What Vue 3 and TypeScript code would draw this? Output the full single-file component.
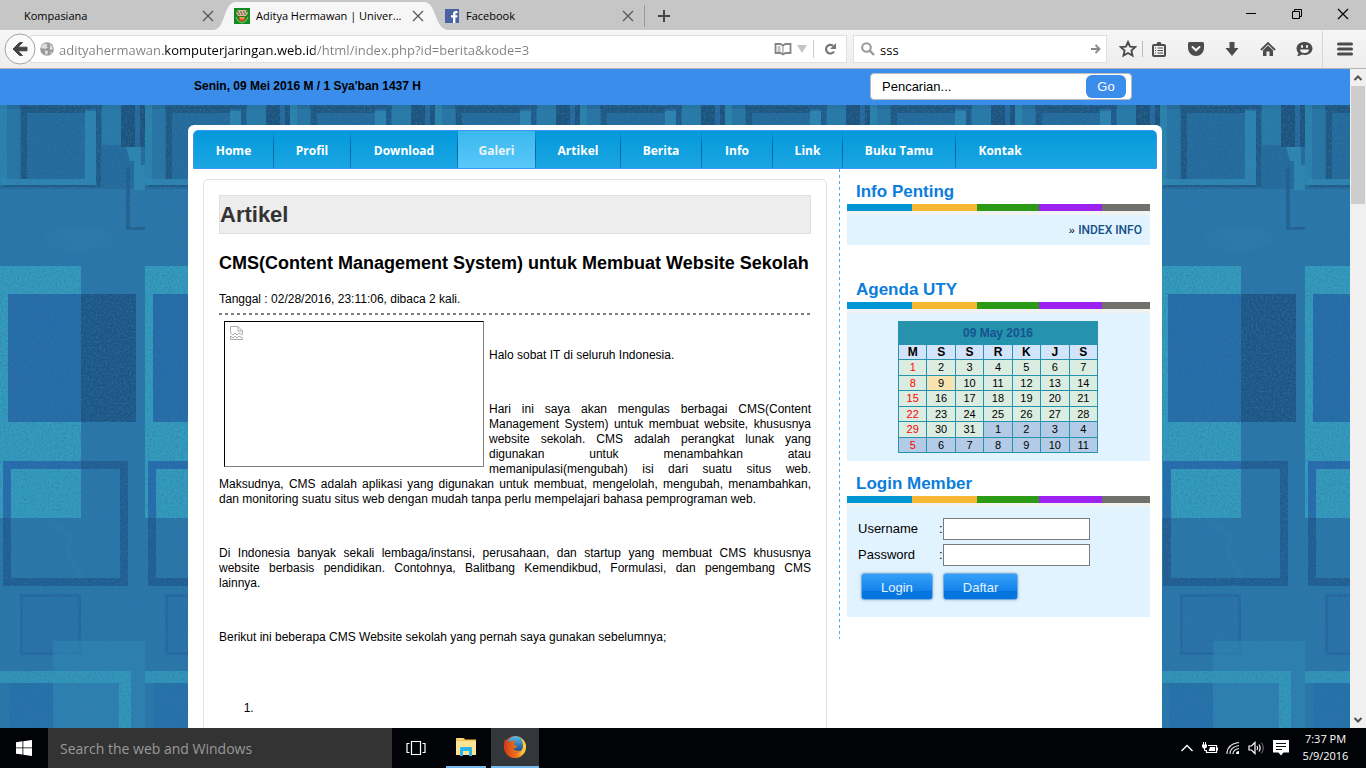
<script setup lang="ts">
import { ref } from 'vue'

interface Day {
  n: number
  other?: boolean
  today?: boolean
}

const menu: string[] = ['Home', 'Profil', 'Download', 'Galeri', 'Artikel', 'Berita', 'Info', 'Link', 'Buku Tamu', 'Kontak']
const activeMenu = ref('Galeri')

const weekdays: string[] = ['M', 'S', 'S', 'R', 'K', 'J', 'S']
const weeks: Day[][] = Array.from({ length: 6 }, (_, w) =>
  Array.from({ length: 7 }, (_, d) => {
    const n = w * 7 + d + 1
    return n > 31 ? { n: n - 31, other: true } : { n, today: n === 9 }
  }),
)

const url = ref('adityahermawan.komputerjaringan.web.id/html/index.php?id=berita&kode=3')
const webSearch = ref('sss')
const siteSearch = ref('Pencarian...')
const taskSearch = ref('')
const username = ref('')
const password = ref('')
</script>

<template>
  <div class="desktop">
    <header class="tabs">
      <div class="tab first">
        <button class="tab-label" type="button">Kompasiana</button>
        <button class="close" type="button" aria-label="Close tab">
          <svg width="12" height="12" viewBox="0 0 12 12"><path d="M1 1L11 11M11 1L1 11" stroke="#555" stroke-width="1.2" fill="none" /></svg>
        </button>
      </div>
      <div class="tab active">
        <svg class="tab-shape" width="236" height="28" viewBox="0 0 236 28"><path d="M0 28C13 28 10 0 23 0H211C224 0 221 28 236 28Z" fill="#f6f6f6" /></svg>
        <svg class="favicon" width="16" height="16" viewBox="0 0 16 16">
          <rect width="16" height="16" fill="#118a22" />
          <path d="M2 5L4 2H12L14 5L12 8H4Z" fill="#e9b0a2" />
          <path d="M3 4H13M4 6H12" stroke="#247b2b" stroke-width="1" stroke-dasharray="2 1" />
          <path d="M5 8L8 10L11 8V12L8 14L5 12Z" fill="#e5482b" />
          <path d="M2 9L4 13L8 15L12 13L14 9" stroke="#75d468" fill="none" />
          <path d="M6 10H10" stroke="#ffe36b" />
        </svg>
        <button class="tab-label" type="button">Aditya Hermawan | Univer...</button>
        <button class="close" type="button" aria-label="Close tab">
          <svg width="12" height="12" viewBox="0 0 12 12"><path d="M1 1L11 11M11 1L1 11" stroke="#555" stroke-width="1.2" fill="none" /></svg>
        </button>
      </div>
      <div class="tab last">
        <svg class="favicon" width="14" height="14" viewBox="0 0 14 14">
          <rect width="14" height="14" fill="#4862a3" />
          <path d="M8 14V8.500H6V6.300H8V4.800C8 3 9 2 10.800 2H12.500V4.200H11.300C10.700 4.200 10.400 4.500 10.400 5.100V6.300H12.500L12.200 8.500H10.400V14Z" fill="#fff" />
        </svg>
        <button class="tab-label" type="button">Facebook</button>
        <button class="close" type="button" aria-label="Close tab">
          <svg width="12" height="12" viewBox="0 0 12 12"><path d="M1 1L11 11M11 1L1 11" stroke="#555" stroke-width="1.2" fill="none" /></svg>
        </button>
      </div>
      <button class="new-tab" type="button" aria-label="New tab">
        <svg width="12" height="12" viewBox="0 0 12 12"><path d="M6 0V12M0 6H12" stroke="#444" stroke-width="2" /></svg>
      </button>
      <div class="win-controls">
        <button type="button" aria-label="Minimize"><svg width="12" height="12" viewBox="0 0 12 12"><path d="M1 5.500H11" stroke="#000" /></svg></button>
        <button type="button" aria-label="Restore"><svg width="12" height="12" viewBox="0 0 12 12"><path d="M1.500 3.500H8.500V10.500H1.500ZM3.500 3.500V1.500H10.500V8.500H8.500" stroke="#000" fill="none" /></svg></button>
        <button type="button" aria-label="Close"><svg width="12" height="12" viewBox="0 0 12 12"><path d="M1 1L11 11M11 1L1 11" stroke="#000" stroke-width="1.200" /></svg></button>
      </div>
    </header>

    <div class="toolbar">
      <button class="back" type="button" aria-label="Back">
        <svg width="32" height="32" viewBox="0 0 32 32">
          <circle cx="16" cy="16" r="15" fill="#fafafa" stroke="#a3a3a3" />
          <path d="M9 16L15.500 9.500H18.500L14 14.200H23V17.800H14L18.500 22.500H15.500Z" fill="#444" stroke="#444" />
        </svg>
      </button>
      <div class="urlbar">
        <svg width="14" height="14" viewBox="0 0 14 14">
          <circle cx="7" cy="7" r="6.800" fill="#999" />
          <path d="M2 3L5 1.500L7.500 2L6.500 4L8 5L5.500 7L3.500 6.500L1 6ZM9 1.500L12 4L13 7L10.500 8L9.500 6L10.500 4ZM5 8.500L8 9L7.500 12L6 13L5 11ZM10 10L12 9.500L11 12Z" fill="#dedede" />
        </svg>
        <input v-model="url" class="url" type="text" aria-label="Address" />
        <button type="button" aria-label="Reader view">
          <svg width="18" height="14" viewBox="0 0 18 14">
            <path d="M1.500 2H6.500L9 3.500L11.500 2H16.500V11H11.500L9 12.500L6.500 11H1.500Z" fill="none" stroke="#858585" stroke-width="1.800" />
            <path d="M9 3V12.500M3.500 5H6.500M3.500 7H6.500M3.500 9H6.500" stroke="#858585" />
          </svg>
        </button>
        <svg class="caret" width="10" height="8" viewBox="0 0 10 8"><path d="M0 0H10L5 8Z" fill="#c4c4c4" /></svg>
        <button class="reload" type="button" aria-label="Reload">
          <svg width="12" height="12" viewBox="0 0 12 12">
            <path d="M9 2.800A4.300 4.300 0 1 0 10 8.500" fill="none" stroke="#777" stroke-width="2.200" />
            <path d="M12 0V6H6Z" fill="#777" />
          </svg>
        </button>
      </div>
      <div class="searchbar">
        <svg width="14" height="14" viewBox="0 0 14 14"><circle cx="5.500" cy="5.500" r="4.300" fill="none" stroke="#999" stroke-width="2" /><path d="M8.500 8.500L13 13" stroke="#999" stroke-width="2.400" /></svg>
        <input v-model="webSearch" type="text" aria-label="Web search" />
        <button type="button" aria-label="Search">
          <svg width="10" height="10" viewBox="0 0 10 10"><path d="M0 5H8M4.500 1L8.500 5L4.500 9" stroke="#888" stroke-width="1.800" fill="none" /></svg>
        </button>
      </div>
      <button class="tool star" type="button" aria-label="Bookmark">
        <svg width="18" height="18" viewBox="0 0 18 18"><path d="M9 2L11.100 6.600L16.200 7.100L12.400 10.500L13.500 15.600L9 13L4.500 15.600L5.600 10.500L1.800 7.100L6.900 6.600Z" fill="none" stroke="#4c4c4c" stroke-width="1.900" /></svg>
      </button>
      <button class="tool list" type="button" aria-label="Bookmarks list">
        <svg width="16" height="16" viewBox="0 0 16 16"><rect x="2" y="4" width="12" height="11" rx="1" fill="none" stroke="#4c4c4c" stroke-width="2" /><path d="M5 4L6.500 1H9.500L11 4Z" fill="#4c4c4c" /><path d="M4 7H5M6.500 7H12M4 9.500H5M6.500 9.500H12M4 12H5M6.500 12H12" stroke="#4c4c4c" stroke-width="1.200" /></svg>
      </button>
      <button class="tool" type="button" aria-label="Pocket">
        <svg width="16" height="16" viewBox="0 0 16 16"><path d="M1.500 1H14.500Q16 1 16 2.500V7A8 8 0 0 1 0 7V2.500Q0 1 1.500 1Z" fill="#4c4c4c" /><path d="M4.500 6L8 9.300L11.500 6" fill="none" stroke="#f4f4f4" stroke-width="2" stroke-linecap="round" /></svg>
      </button>
      <button class="tool" type="button" aria-label="Downloads">
        <svg width="16" height="16" viewBox="0 0 16 16"><path d="M5.500 1H10.500V7H14.500L8 15L1.500 7H5.500Z" fill="#4c4c4c" /></svg>
      </button>
      <button class="tool" type="button" aria-label="Home page">
        <svg width="16" height="16" viewBox="0 0 16 16"><path d="M1 9L8 2L15 9" fill="none" stroke="#4c4c4c" stroke-width="1.800" /><path d="M3 9.300L8 4.500L13 9.300V15H9.500V10.500H6.500V15H3Z" fill="#4c4c4c" /></svg>
      </button>
      <button class="tool" type="button" aria-label="Hello chat">
        <svg width="17" height="16" viewBox="0 0 17 16"><path d="M8.500 1C13 1 16.500 3.700 16.500 7.500S13 14 8.500 14Q7 14 6 13.600Q4 15.300 1 15Q2.600 13.600 2.400 12Q.5 10.200 .5 7.500C.5 3.700 4 1 8.500 1Z" fill="#4c4c4c" /><path d="M4 8.500H13Q12.500 12 8.500 12T4 8.500Z" fill="#f2f2f2" /><rect x="5" y="4" width="2" height="3" rx="1" fill="#f2f2f2" /><rect x="10" y="4" width="2" height="3" rx="1" fill="#f2f2f2" /></svg>
      </button>
      <button class="tool burger" type="button" aria-label="Open menu">
        <svg width="16" height="14" viewBox="0 0 16 14"><path d="M1.500 2H14.500M1.500 7H14.500M1.500 12H14.500" stroke="#4c4c4c" stroke-width="3" stroke-linecap="round" /></svg>
      </button>
    </div>

    <div class="viewport">
      <div class="page">
        <div class="topbar">
          <div class="topbar-inner">
            <strong>Senin, 09 Mei 2016 M / 1 Sya'ban 1437 H</strong>
            <form class="site-search" @submit.prevent>
              <input v-model="siteSearch" type="text" aria-label="Pencarian" />
              <button type="submit">Go</button>
            </form>
          </div>
        </div>

        <div class="site">
          <svg class="wallpaper" width="100%" height="100%" aria-hidden="true">
            <defs>
              <pattern id="squares" width="145" height="640" patternUnits="userSpaceOnUse">
                <rect width="145" height="640" fill="#2876ac" />
                <rect width="145" height="84" fill="#1d6092" opacity=".55" />
                <rect width="121" height="4" fill="#1a4f79" opacity=".7" />
                <rect width="7" height="80" fill="#2c8fb8" opacity=".7" />
                <rect x="7" width="13" height="74" fill="#2b83b2" opacity=".45" />
                <path d="M21 2H85V8H27V74H21Z" fill="#194d77" opacity=".7" />
                <path d="M85 6H96V80H2V74H85Z" fill="#2f8dba" opacity=".75" />
                <path d="M96 3H101V82H4V80H96Z" fill="#1a527f" opacity=".7" />
                <rect x="102" width="19" height="40" fill="#2a82b1" opacity=".7" />
                <rect x="121" width="24" height="42" fill="#194c77" opacity=".85" />
                <rect x="135" width="5" height="42" fill="#2468a0" />
                <path d="M126 42H141V60H145V85H134V56H130Z" fill="#3194bd" opacity=".7" />
                <path d="M126 62H130V122H145V125H126Z" fill="#1c5888" opacity=".7" />
                <ellipse cx="78" cy="134" rx="34" ry="12" fill="#2e91ba" opacity=".12" />
                <ellipse cx="84" cy="130" rx="20" ry="7" fill="#2e91ba" opacity=".12" />
                <rect y="161" width="81" height="252" fill="#329dc0" />
                <rect x="8" y="189" width="73" height="128" fill="#236bab" />
                <rect x="81" y="189" width="55" height="128" fill="#1b5587" />
                <path d="M3 356H81V364H11V413H3Z" fill="#256bae" />
                <path d="M81 356H128V481H3V413H11V473H120V364H81Z" fill="#1e5c93" />
                <path d="M50 416L70 430L68 450L82 472" stroke="#359ebd" stroke-width="4" opacity=".1" fill="none" />
                <rect x="21.500" y="490.500" width="58" height="58" fill="#266fab" stroke="#2062a0" stroke-width="3" opacity=".7" />
                <rect x="53" y="536" width="92" height="104" fill="#2d89b7" opacity=".6" />
                <rect x="9" y="578" width="44" height="62" fill="#2470ac" />
                <rect y="566" width="119" height="12" fill="#329bbf" opacity=".85" />
                <rect x="119" y="566" width="12" height="74" fill="#329bbf" opacity=".9" />
              </pattern>
              <filter id="grain" x="0" y="0" width="100%" height="100%">
                <feTurbulence type="fractalNoise" baseFrequency=".5" numOctaves="3" seed="4" />
                <feColorMatrix values="0 0 0 0 .04  0 0 0 0 .18  0 0 0 0 .32  1.400 0 0 0 -.55" />
              </filter>
            </defs>
            <rect width="100%" height="100%" fill="url(#squares)" />
            <rect width="100%" height="100%" filter="url(#grain)" />
          </svg>

          <div class="container">
            <nav class="menu">
              <a v-for="item in menu" :key="item" href="#" :class="{ on: item === activeMenu }" @click.prevent="activeMenu = item">{{ item }}</a>
            </nav>
            <div class="columns">
              <main class="article">
                <h1>Artikel</h1>
                <h2>CMS(Content Management System) untuk Membuat Website Sekolah</h2>
                <div class="meta">Tanggal : 02/28/2016, 23:11:06, dibaca 2 kali.</div>
                <div class="picture" role="img" aria-label="Gambar artikel">
                  <svg width="13" height="14" viewBox="0 0 13 14"><path d="M.5 7V.5H8L12.500 5V8M8 .5V5H12.500M.5 7L3 9L5 7L7 9L9 7L12.500 9M.5 13.500V10L3 12L5 10L7 12L9 10L12.500 12V13.500Z" fill="none" stroke="#aaa" /></svg>
                </div>
                <p class="lead">Halo sobat IT di seluruh Indonesia.</p>
                <p>Hari ini saya akan mengulas berbagai CMS(Content Management System) untuk membuat website, khususnya website sekolah. CMS adalah perangkat lunak yang digunakan untuk menambahkan atau memanipulasi(mengubah) isi dari suatu situs web. Maksudnya, CMS adalah aplikasi yang digunakan untuk membuat, mengelolah, mengubah, menambahkan, dan monitoring suatu situs web dengan mudah tanpa perlu mempelajari bahasa pemprograman web.</p>
                <p>
                  <span class="full">Di Indonesia banyak sekali lembaga/instansi, perusahaan, dan startup yang membuat CMS khususnya</span>
                  <span class="full">website berbasis pendidikan. Contohnya, Balitbang Kemendikbud, Formulasi, dan pengembang CMS</span>
                  lainnya.
                </p>
                <p>Berikut ini beberapa CMS Website sekolah yang pernah saya gunakan sebelumnya;</p>
                <ol><li></li></ol>
              </main>

              <aside class="side">
                <section class="block info">
                  <h3>Info Penting</h3>
                  <div class="stripe"></div>
                  <div class="body"><span>»</span> <a href="#">INDEX INFO</a></div>
                </section>
                <section class="block agenda">
                  <h3>Agenda UTY</h3>
                  <div class="stripe"></div>
                  <div class="body">
                    <table>
                      <thead>
                        <tr><th class="month" colspan="7">09 May 2016</th></tr>
                        <tr class="names"><th v-for="(d, i) in weekdays" :key="i">{{ d }}</th></tr>
                      </thead>
                      <tbody>
                        <tr v-for="(week, w) in weeks" :key="w">
                          <td v-for="(day, d) in week" :key="d" :class="{ sunday: d === 0, other: day.other, today: day.today }">{{ day.n }}</td>
                        </tr>
                      </tbody>
                    </table>
                  </div>
                </section>
                <section class="block">
                  <h3>Login Member</h3>
                  <div class="stripe"></div>
                  <form class="body login" @submit.prevent>
                    <div class="field"><label for="user">Username</label><span>:</span><input id="user" v-model="username" type="text" /></div>
                    <div class="field"><label for="pass">Password</label><span>:</span><input id="pass" v-model="password" type="password" /></div>
                    <div class="actions"><button type="submit">Login</button><button type="button">Daftar</button></div>
                  </form>
                </section>
              </aside>
            </div>
          </div>
        </div>
      </div>
      <div class="scrollbar">
        <svg width="16" height="17" viewBox="0 0 16 17"><path d="M4.500 11L8 7.500L11.500 11" fill="none" stroke="#505050" stroke-width="2" /></svg>
        <div class="thumb"></div>
        <svg class="down" width="16" height="17" viewBox="0 0 16 17"><path d="M4.500 7L8 10.500L11.500 7" fill="none" stroke="#505050" stroke-width="2" /></svg>
      </div>
    </div>

    <footer class="taskbar">
      <button class="start" type="button" aria-label="Start">
        <svg width="16" height="16" viewBox="0 0 16 16"><path d="M0 2.300L6.500 1.300V7.500H0ZM7.300 1.200L16 0V7.500H7.300ZM0 8.300H6.500V14.600L0 13.700ZM7.300 8.300H16V16L7.300 14.800Z" fill="#fff" /></svg>
      </button>
      <input v-model="taskSearch" type="search" placeholder="Search the web and Windows" aria-label="Search the web and Windows" />
      <button class="task view" type="button" aria-label="Task view">
        <svg width="20" height="14" viewBox="0 0 20 14"><path d="M5.500 .5H14.500V13.500H5.500ZM3.500 2.500H1V11.500H3.500M16.500 2.500H19V11.500H16.500" fill="none" stroke="#fff" stroke-width="1.200" /></svg>
      </button>
      <button class="task explorer" type="button" aria-label="File Explorer">
        <svg width="22" height="20" viewBox="0 0 22 20"><path d="M1 1H9L10 2.500H21V18H1Z" fill="#f3c65a" /><path d="M1 4H21V18H1Z" fill="#fde492" /><path d="M3 2H7" stroke="#fff3bb" /><path d="M5 11Q5 10 6 10H16Q17 10 17 11V19H14V14H8V19H5Z" fill="#29b5ef" /></svg>
      </button>
      <button class="task firefox" type="button" aria-label="Firefox">
        <svg width="24" height="24" viewBox="0 0 24 24">
          <defs>
            <linearGradient id="fox" x1="0" y1="0" x2="1" y2="0"><stop offset="0" stop-color="#d03a18" /><stop offset=".55" stop-color="#ec701c" /><stop offset="1" stop-color="#ffd84a" /></linearGradient>
            <linearGradient id="globe" x1="0" y1="0" x2="0" y2="1"><stop offset="0" stop-color="#54bce9" /><stop offset="1" stop-color="#173e86" /></linearGradient>
          </defs>
          <circle cx="12" cy="12" r="11" fill="url(#fox)" />
          <circle cx="12.500" cy="9.500" r="8.300" fill="url(#globe)" />
          <path d="M2 4Q1 8 1 12A11 11 0 0 0 22.500 15Q18 20 12 17.500Q16 18 17.500 15.500Q13 17 10 13.500Q14 13 14 11L10.500 9.500Q11 7 13 6Q9 5 7 7L4.500 6.500Q3 5.500 2 4Z" fill="url(#fox)" />
          <path d="M18 3Q23 7 22.800 12Q22 18 17 20Q20 16 20 10Q19.800 6 18 3Z" fill="#ffc83d" />
        </svg>
      </button>
      <div class="tray">
        <svg width="14" height="10" viewBox="0 0 14 10"><path d="M1.500 8L7 2.500L12.500 8" fill="none" stroke="#fff" stroke-width="1.400" /></svg>
        <svg width="16" height="14" viewBox="0 0 16 14"><path d="M6 4.500H14.500V11.500H4.500V9" fill="none" stroke="#fff" stroke-width="1.200" /><path d="M8 6H13V10H6.500ZM15 6.500H16V9.500H15ZM0 3.500H5V6L3.500 7.500H1.500L0 6Z" fill="#fff" /><path d="M1.500 1V4M3.500 1V4M2.500 7V9.500H4.500" stroke="#fff" fill="none" /></svg>
        <svg width="14" height="14" viewBox="0 0 14 14"><path d="M1 13Q1 3 13 1.500M4 13Q4 6 13 4.500M7 13Q7 8.500 13 7.500" stroke="#ddd" fill="none" stroke-width="1.200" /><path d="M10 13Q10 10 13 10V13Z" fill="#fff" /></svg>
        <svg width="17" height="14" viewBox="0 0 17 14"><path d="M1 5H3.500L7 1.500V12.500L3.500 9H1Z" stroke="#fff" fill="none" stroke-width="1.200" /><path d="M9 5Q10.300 7 9 9M11 3.500Q13.300 7 11 10.500" stroke="#fff" fill="none" stroke-width="1.200" /><path d="M13.500 1.500Q17 7 13.500 12.500" stroke="#777" fill="none" /></svg>
        <svg width="16" height="16" viewBox="0 0 16 16"><path d="M0 0H16V12.500H10.500L8 15.500L5.500 12.500H0Z" fill="#fff" /><path d="M3 3.500H13M3 6.500H13M3 9.500H9" stroke="#111" stroke-width="1.200" /></svg>
      </div>
      <div class="clock"><span>7:37 PM</span><span>5/9/2016</span></div>
    </footer>
  </div>
</template>

<style>
body {
  margin: 0;
  overflow: hidden;
}
</style>

<style scoped>
* {
  box-sizing: border-box;
}
.desktop {
  height: 100vh;
  display: flex;
  flex-direction: column;
  font: 12px/15px "Liberation Sans", Arial, sans-serif;
  color: #000;
}
button {
  border: 0;
  padding: 0;
  background: none;
  color: inherit;
  font: inherit;
}
input {
  font: inherit;
  color: inherit;
  outline: 0;
}
svg {
  display: block;
  flex: none;
}

/* tab strip */
.tabs {
  height: 30px;
  flex: none;
  display: flex;
  background: #c6c6c6;
  font: 11px/16px "Open Sans", "Noto Sans", sans-serif;
}
.tab {
  position: relative;
  display: flex;
  align-items: center;
  padding-top: 2px;
  width: 210px;
}
.tab.first {
  width: 224px;
  padding-left: 24px;
  padding-right: 10px;
}
.tab.active {
  padding-left: 10px;
}
.tab.last {
  padding-left: 11px;
}
.tab-shape {
  position: absolute;
  left: -11px;
  top: 2px;
}
.favicon {
  position: relative;
  margin-right: 7px;
}
.active .favicon {
  margin-right: 6px;
}
.tab-label {
  position: relative;
  flex: 1;
  text-align: left;
  white-space: nowrap;
}
.close {
  position: relative;
  width: 12px;
  height: 12px;
  margin-right: 10px;
}
.first .close {
  margin-right: 0;
}
.new-tab {
  width: 38px;
  height: 22px;
  margin-top: 5px;
  border-left: 1px solid #999;
  display: flex;
  align-items: center;
  justify-content: center;
}
.win-controls {
  margin-left: auto;
  display: flex;
  height: 28px;
}
.win-controls button {
  width: 46px;
  display: flex;
  align-items: center;
  justify-content: center;
}

/* navigation toolbar */
.toolbar {
  height: 39px;
  flex: none;
  display: flex;
  align-items: center;
  border-bottom: 1px solid #b5b5b5;
  background: linear-gradient(#f6f6f6, #ededed);
  font: 13px/18px "Open Sans", "Noto Sans", sans-serif;
}
.back {
  position: relative;
  z-index: 1;
  width: 32px;
  margin-left: 4px;
}
.urlbar,
.searchbar {
  height: 28px;
  display: flex;
  align-items: center;
  border: 1px solid #dfdfdf;
  background: #fff;
}
.urlbar {
  flex: 1;
  min-width: 0;
  margin-left: -6px;
  padding-left: 9px;
}
.url {
  flex: 1;
  min-width: 0;
  height: 24px;
  border: 0;
  padding: 2px 0 0;
  margin: 0 8px 0 5px;
  color: transparent;
  background: linear-gradient(90deg, #808080 104px, #000 104px 256px, #808080 256px);
  -webkit-background-clip: text;
  background-clip: text;
}
.caret {
  margin: 0 6px 0 5px;
}
.reload {
  width: 33px;
  height: 18px;
  border-left: 1px solid #ccc;
  display: flex;
  align-items: center;
  justify-content: center;
}
.searchbar {
  width: 254px;
  margin-left: 6px;
  padding: 0 5px 0 7px;
}
.searchbar input {
  flex: 1;
  min-width: 0;
  border: 0;
  padding: 2px 0 0;
  margin-left: 5px;
  background: none;
}
.tool {
  width: 36px;
  height: 37px;
  display: flex;
  align-items: center;
  justify-content: center;
}
.tool.star {
  width: 28px;
  margin-left: 7px;
}
.tool.list {
  height: 16px;
  padding-right: 4px;
  border-left: 1px solid #bbb;
}
.tool.burger {
  width: 44px;
  border-left: 1px solid #d6d6d6;
}

/* page area */
.viewport {
  flex: 1;
  min-height: 0;
  display: flex;
}
.page {
  flex: 1;
  min-width: 0;
  display: flex;
  flex-direction: column;
  overflow: hidden;
}
.topbar {
  height: 36px;
  flex: none;
  background: #3b8dec;
}
.topbar-inner {
  max-width: 974px;
  height: 35px;
  margin: 0 auto;
  padding: 0 30px 0 6px;
  display: flex;
  align-items: center;
  justify-content: space-between;
}
.site-search {
  width: 262px;
  height: 27px;
  display: flex;
  align-items: center;
  padding: 0 5px 0 11px;
  border: 1px solid #bcbcbc;
  border-radius: 4px;
  background: #fff;
  font-size: 13px;
}
.site-search input {
  flex: 1;
  min-width: 0;
  border: 0;
  padding: 0;
}
.site-search button {
  width: 40px;
  height: 23px;
  border-radius: 6px;
  background: #3b8dec;
  color: #fff;
}
.site {
  position: relative;
  flex: 1;
  min-height: 0;
  overflow: hidden;
  background: #2672a8;
}
.wallpaper {
  position: absolute;
  inset: 0;
}
.container {
  position: relative;
  max-width: 974px;
  min-height: 100%;
  margin: 20px auto 0;
  padding: 5px;
  border-radius: 6px;
  background: #fff;
}
.menu {
  height: 39px;
  display: grid;
  grid-template-columns: 80px 77px 107px 78px 85px 81px 71px 70px 113px 88px;
  border: 1px solid #3b97f5;
  border-radius: 5px 5px 0 0;
  background: linear-gradient(#0499db, #1ba6e2);
  font: bold 12px/39px "Open Sans", "Noto Sans", sans-serif;
}
.menu a {
  height: 37px;
  color: #fff;
  text-align: center;
  text-decoration: none;
  border-right: 1px solid;
  border-image: linear-gradient(#0499db, #075f9c, #1187c0) 1;
}
.menu a:last-child {
  border-right: 0;
}
.menu a.on {
  background: linear-gradient(#3cb8ef, #57c8f8);
  color: #e9f5fd;
}
.columns {
  display: flex;
  align-items: flex-start;
}

/* article */
.article {
  flex: 1;
  min-width: 0;
  margin: 10px 12px 0 10px;
  padding: 15px;
  border: 1px solid #e2e2e2;
  border-radius: 5px;
  text-align: justify;
}
h1 {
  margin: 0;
  height: 39px;
  border: 1px solid #e0e0e0;
  background: #ededed;
  color: #333;
  font-size: 22px;
  line-height: 37px;
}
h2 {
  margin: 19px 0 18px;
  font-size: 18px;
  line-height: 21px;
  text-align: left;
}
.meta {
  padding-bottom: 8px;
  background: repeating-linear-gradient(90deg, #808080 0 3px, transparent 3px 6px) bottom / 100% 2px no-repeat;
}
.picture {
  float: left;
  width: 260px;
  height: 146px;
  margin: 6px 5px 5px;
  padding: 4px 5px;
  border: 1px solid;
  border-color: #000 #808080 #808080 #000;
}
p {
  margin: 0 0 39px;
}
.lead {
  padding-top: 33px;
}
.full {
  display: block;
  text-align-last: justify;
}
ol {
  margin: 56px 0 39px;
  padding-left: 38px;
}

/* sidebar */
.side {
  width: 318px;
  padding: 0 7px 22px 8px;
  background: repeating-linear-gradient(#46b3ee 0 3px, transparent 3px 6px) left / 1px 100% no-repeat;
}
.block.info {
  margin-bottom: 22px;
}
h3 {
  margin: 0;
  height: 35px;
  padding: 13px 9px 0;
  color: #0b7ddb;
  font-size: 17px;
  line-height: 20px;
}
.stripe {
  height: 7px;
  background: linear-gradient(90deg, #0096d3 65px, #f8b733 65px 130px, #2c9a15 130px 192px, #9b22f0 192px 255px, #72706c 255px);
}
.body {
  border-top: 4px solid #f1f3f3;
  background: #e1f3ff;
}
.info .body {
  height: 34px;
  padding: 8px 8px 0 0;
  text-align: right;
}
.info a {
  color: #144f87;
  font: 500 12px/15px Roboto, sans-serif;
  text-decoration: none;
}
.info span {
  font-size: 11px;
}
.agenda .body {
  padding: 8px 1px 8px 0;
}
table {
  width: 200px;
  height: 132px;
  margin: 0 auto;
  border-spacing: 1px;
  table-layout: fixed;
  background: #2592ae;
  text-align: center;
  font-size: 11px;
  line-height: 12px;
}
th,
td {
  padding: 0;
}
td {
  background: #dbece0;
}
th {
  font-size: 12px;
}
th.month {
  height: 22px;
  color: #17528f;
}
.names th {
  height: 14px;
  background: #d2e4fa;
}
td.today {
  background: #f6e3b0;
}
td.other {
  background: #b3cbe6;
}
td.sunday {
  color: #f00;
}
.login {
  height: 114px;
  padding: 11px;
  font-size: 13px;
}
.field {
  display: flex;
  align-items: center;
  margin-bottom: 4px;
}
.field label {
  width: 81px;
  padding-bottom: 2px;
}
.field span {
  width: 4px;
  padding-bottom: 2px;
}
.field input {
  width: 147px;
  height: 22px;
  padding: 0 3px;
  border: 1px solid #7a7a7a;
  background: #fff;
}
.actions {
  display: flex;
  gap: 10px;
  padding: 3px 3px 0;
}
.actions button {
  height: 27px;
  padding: 1px 19px 0;
  border: 1px solid #78aede;
  border-radius: 3px;
  background: linear-gradient(#36a1fb, #1180e8 70%, #0475df 70%);
  box-shadow: 0 0 3px #9bb8cc;
  color: #e4f2ff;
}

/* scrollbar */
.scrollbar {
  width: 16px;
  display: flex;
  flex-direction: column;
  background: #f0f0f0;
}
.thumb {
  height: 118px;
  margin: 0 1px;
  background: #cdcdcd;
}
.down {
  margin-top: auto;
}

/* taskbar */
.taskbar {
  height: 40px;
  flex: none;
  display: flex;
  background: #020307;
  color: #fff;
  font: 11px/17px "Open Sans", "Noto Sans", sans-serif;
}
.start {
  width: 48px;
  display: flex;
  align-items: center;
  justify-content: center;
}
.taskbar input {
  width: 344px;
  border: 0;
  padding: 0 12px;
  background: #333;
  font-size: 14px;
}
.taskbar input::placeholder {
  color: #999;
}
.task {
  width: 48px;
  display: flex;
  align-items: center;
  justify-content: center;
}
.explorer {
  width: 40px;
  margin: 0 5px 0 6px;
}
.explorer,
.firefox {
  border-bottom: 2px solid #76b9ed;
}
.firefox {
  background: #33373c;
}
.tray {
  margin-left: auto;
  display: flex;
  align-items: center;
  gap: 8px;
}
.clock {
  width: 73px;
  margin-right: 4px;
  padding-top: 2px;
  display: flex;
  flex-direction: column;
  align-items: center;
}
</style>
